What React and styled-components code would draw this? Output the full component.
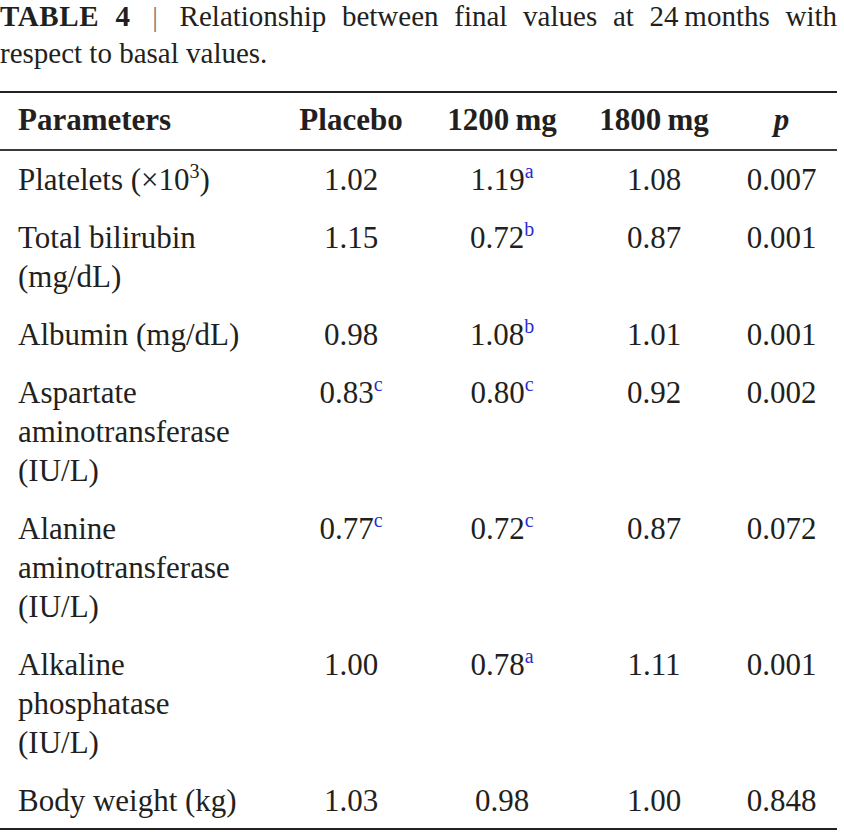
import React from 'react'
import styled, { createGlobalStyle } from 'styled-components'

const GlobalStyle = createGlobalStyle`
    body {
        margin: 0;
        background: #fff;
    }
`

// a name line is a string, or [text, superscript, text]
const rows = [
    { name: [['Platelets (×10', '3', ')']], values: [['1.02'], ['1.19', 'a'], ['1.08'], ['0.007']] },
    { name: ['Total bilirubin', '(mg/dL)'], values: [['1.15'], ['0.72', 'b'], ['0.87'], ['0.001']] },
    { name: ['Albumin (mg/dL)'], values: [['0.98'], ['1.08', 'b'], ['1.01'], ['0.001']] },
    { name: ['Aspartate', 'aminotransferase', '(IU/L)'], values: [['0.83', 'c'], ['0.80', 'c'], ['0.92'], ['0.002']] },
    { name: ['Alanine', 'aminotransferase', '(IU/L)'], values: [['0.77', 'c'], ['0.72', 'c'], ['0.87'], ['0.072']] },
    { name: ['Alkaline', 'phosphatase', '(IU/L)'], values: [['1.00'], ['0.78', 'a'], ['1.11'], ['0.001']] },
    { name: ['Body weight (kg)'], values: [['1.03'], ['0.98'], ['1.00'], ['0.848']] },
]

const columns = [280, 142, 160, 144, 111]

const NameLine = ({ line }) => {
    if (typeof line === 'string') return <S.Line>{line}</S.Line>
    const [before, sup, after] = line
    return (
        <S.Line>
            {before}
            <S.Sup>{sup}</S.Sup>
            {after}
        </S.Line>
    )
}

const App = () => {
    return (
        <S.Page>
            <GlobalStyle />
            <S.Caption>
                <S.Label>TABLE 4</S.Label> <S.Bar>|</S.Bar> Relationship between final values at
                24{'\u2009'}months with respect to basal values.
            </S.Caption>
            <S.Table>
                <colgroup>
                    {columns.map((w, i) => (
                        <col key={i} style={{ width: w }} />
                    ))}
                </colgroup>
                <thead>
                    <tr>
                        <S.HeadCell>Parameters</S.HeadCell>
                        <S.HeadCell>Placebo</S.HeadCell>
                        <S.HeadCell>1200{'\u2009'}mg</S.HeadCell>
                        <S.HeadCell>1800{'\u2009'}mg</S.HeadCell>
                        <S.HeadCell>
                            <i>p</i>
                        </S.HeadCell>
                    </tr>
                </thead>
                <tbody>
                    {rows.map((row, i) => (
                        <tr key={i}>
                            <S.Cell>
                                {row.name.map((line, j) => (
                                    <NameLine key={j} line={line} />
                                ))}
                            </S.Cell>
                            {row.values.map(([v, note], j) => (
                                <S.Cell key={j}>
                                    {v}
                                    {note && <S.Sup $note>{note}</S.Sup>}
                                </S.Cell>
                            ))}
                        </tr>
                    ))}
                </tbody>
            </S.Table>
        </S.Page>
    )
}

const S = {
    Page: styled.div`
        width: 837px;
        font-family: 'Liberation Serif', 'Times New Roman', serif;
        color: #231f20;
    `,
    Caption: styled.p`
        margin: -2px 0 19px;
        font-size: 29px;
        line-height: 37px;
        text-align: justify;
    `,
    Label: styled.b`
        letter-spacing: 0.6px;
    `,
    Bar: styled.span`
        margin: 0 6px;
        color: #777;
        font-weight: 300;
        font-size: 28px;
    `,
    Table: styled.table`
        width: 100%;
        table-layout: fixed;
        border-collapse: collapse;
        border-top: 2px solid #222;
        border-bottom: 2px solid #222;
        font-size: 31px;
        line-height: 39px;

        & tbody tr:last-child td {
            padding-bottom: 8px;
        }
    `,
    HeadCell: styled.th`
        padding: 7px 0 10px;
        font-weight: bold;
        text-align: center;
        border-bottom: 2px solid #3a3a3a;

        &:first-child {
            text-align: left;
            padding-left: 18px;
        }
    `,
    Cell: styled.td`
        padding: 9px 0 10px;
        vertical-align: top;
        text-align: center;
        white-space: nowrap;

        &:first-child {
            text-align: left;
            padding-left: 18px;
        }
    `,
    Line: styled.div`
        white-space: nowrap;
    `,
    Sup: styled.sup`
        font-size: 20px;
        line-height: 0;
        vertical-align: 12px;
        color: ${({ $note }) => ($note ? '#2a2ad4' : 'inherit')};
    `,
}

export default App
